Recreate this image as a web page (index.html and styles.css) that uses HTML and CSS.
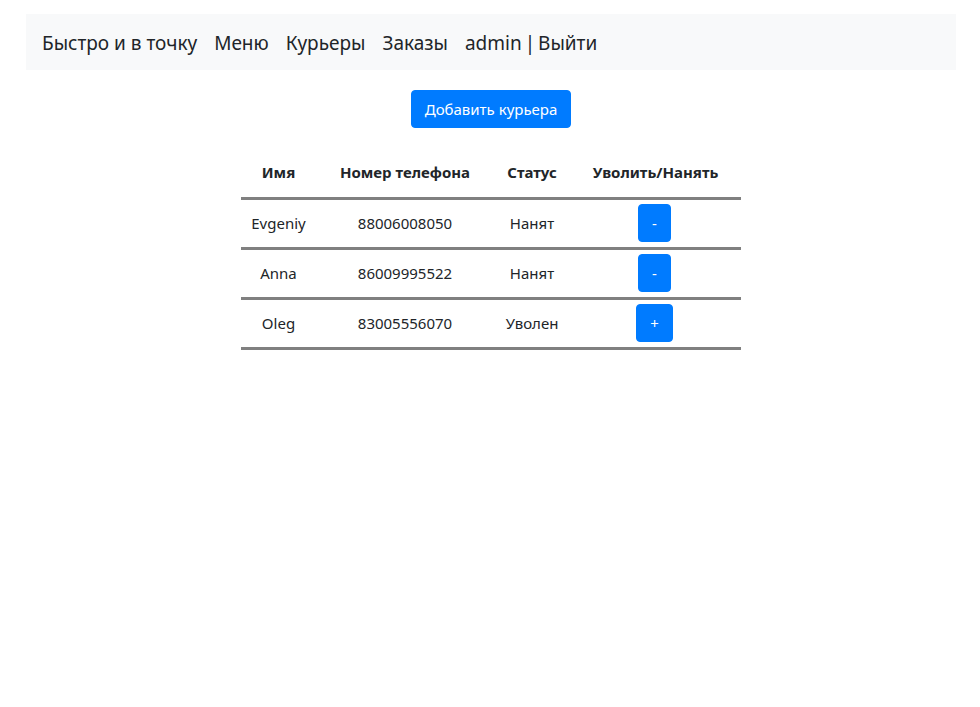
FILE: index.html
```html
<!DOCTYPE html>
<html lang="ru">
<head>
<meta charset="utf-8">
<title>Курьеры</title>
<link rel="stylesheet" href="styles.css">
</head>
<body>
<div class="page">
  <nav class="navbar">
    <a class="nav-link">Быстро и в точку</a>
    <a class="nav-link">Меню</a>
    <a class="nav-link">Курьеры</a>
    <a class="nav-link">Заказы</a>
    <a class="nav-link nav-user">admin | Выйти</a>
  </nav>
  <div class="content">
    <button class="btn btn-add">Добавить курьера</button>
    <table class="couriers">
      <thead>
        <tr><th class="c1">Имя</th><th class="c2">Номер телефона</th><th class="c3">Статус</th><th class="c4">Уволить/Нанять</th></tr>
      </thead>
      <tbody>
        <tr><td>Evgeniy</td><td>88006008050</td><td>Нанят</td><td><button class="btn btn-sm">-</button></td></tr>
        <tr><td>Anna</td><td>86009995522</td><td>Нанят</td><td><button class="btn btn-sm">-</button></td></tr>
        <tr><td>Oleg</td><td>83005556070</td><td>Уволен</td><td><button class="btn btn-sm btn-plus">+</button></td></tr>
      </tbody>
    </table>
  </div>
</div>
</body>
</html>
```

FILE: styles.css
```css
* { box-sizing: border-box; }
body {
  margin: 0;
  font-family: "Noto Sans", "Open Sans", sans-serif;
  color: #212529;
  background: #fff;
}
.page {
  padding: 14px 24px 0 26px;
}
.navbar {
  display: flex;
  align-items: center;
  gap: 17px;
  height: 56px;
  padding: 0 16px;
  background: #f8f9fa;
}
.nav-link {
  font-size: 19px;
  color: #212529;
  line-height: 1;
  padding-top: 2px;
}
.nav-user {
  word-spacing: -2px;
}
.content {
  display: flex;
  flex-direction: column;
  align-items: center;
  padding-top: 20px;
}
.btn {
  font-family: inherit;
  background: #007bff;
  color: #fff;
  border: 1px solid #007bff;
  border-radius: 4px;
  font-size: 15px;
  line-height: 24px;
  padding: 6px 12px;
  cursor: pointer;
}
.btn-add {
  width: 160px;
  height: 38px;
  padding: 0;
}
.couriers {
  margin-top: 20px;
  border-collapse: collapse;
  width: 500px;
  font-size: 15px;
}
.couriers th {
  height: 50px;
  font-weight: 700;
  text-align: center;
  border-bottom: 3px solid #808080;
  padding: 0;
}
.couriers td {
  height: 50px;
  text-align: center;
  border-bottom: 3px solid #808080;
  padding: 0;
}
.c1 { width: 75px; }
.c2 { width: 178px; }
.c3 { width: 76px; }
.c4 { width: 171px; }
.btn-sm {
  height: 38px;
  width: 33px;
  padding: 0;
  margin-left: -2px;
}
.btn-plus {
  width: 37px;
}
```
